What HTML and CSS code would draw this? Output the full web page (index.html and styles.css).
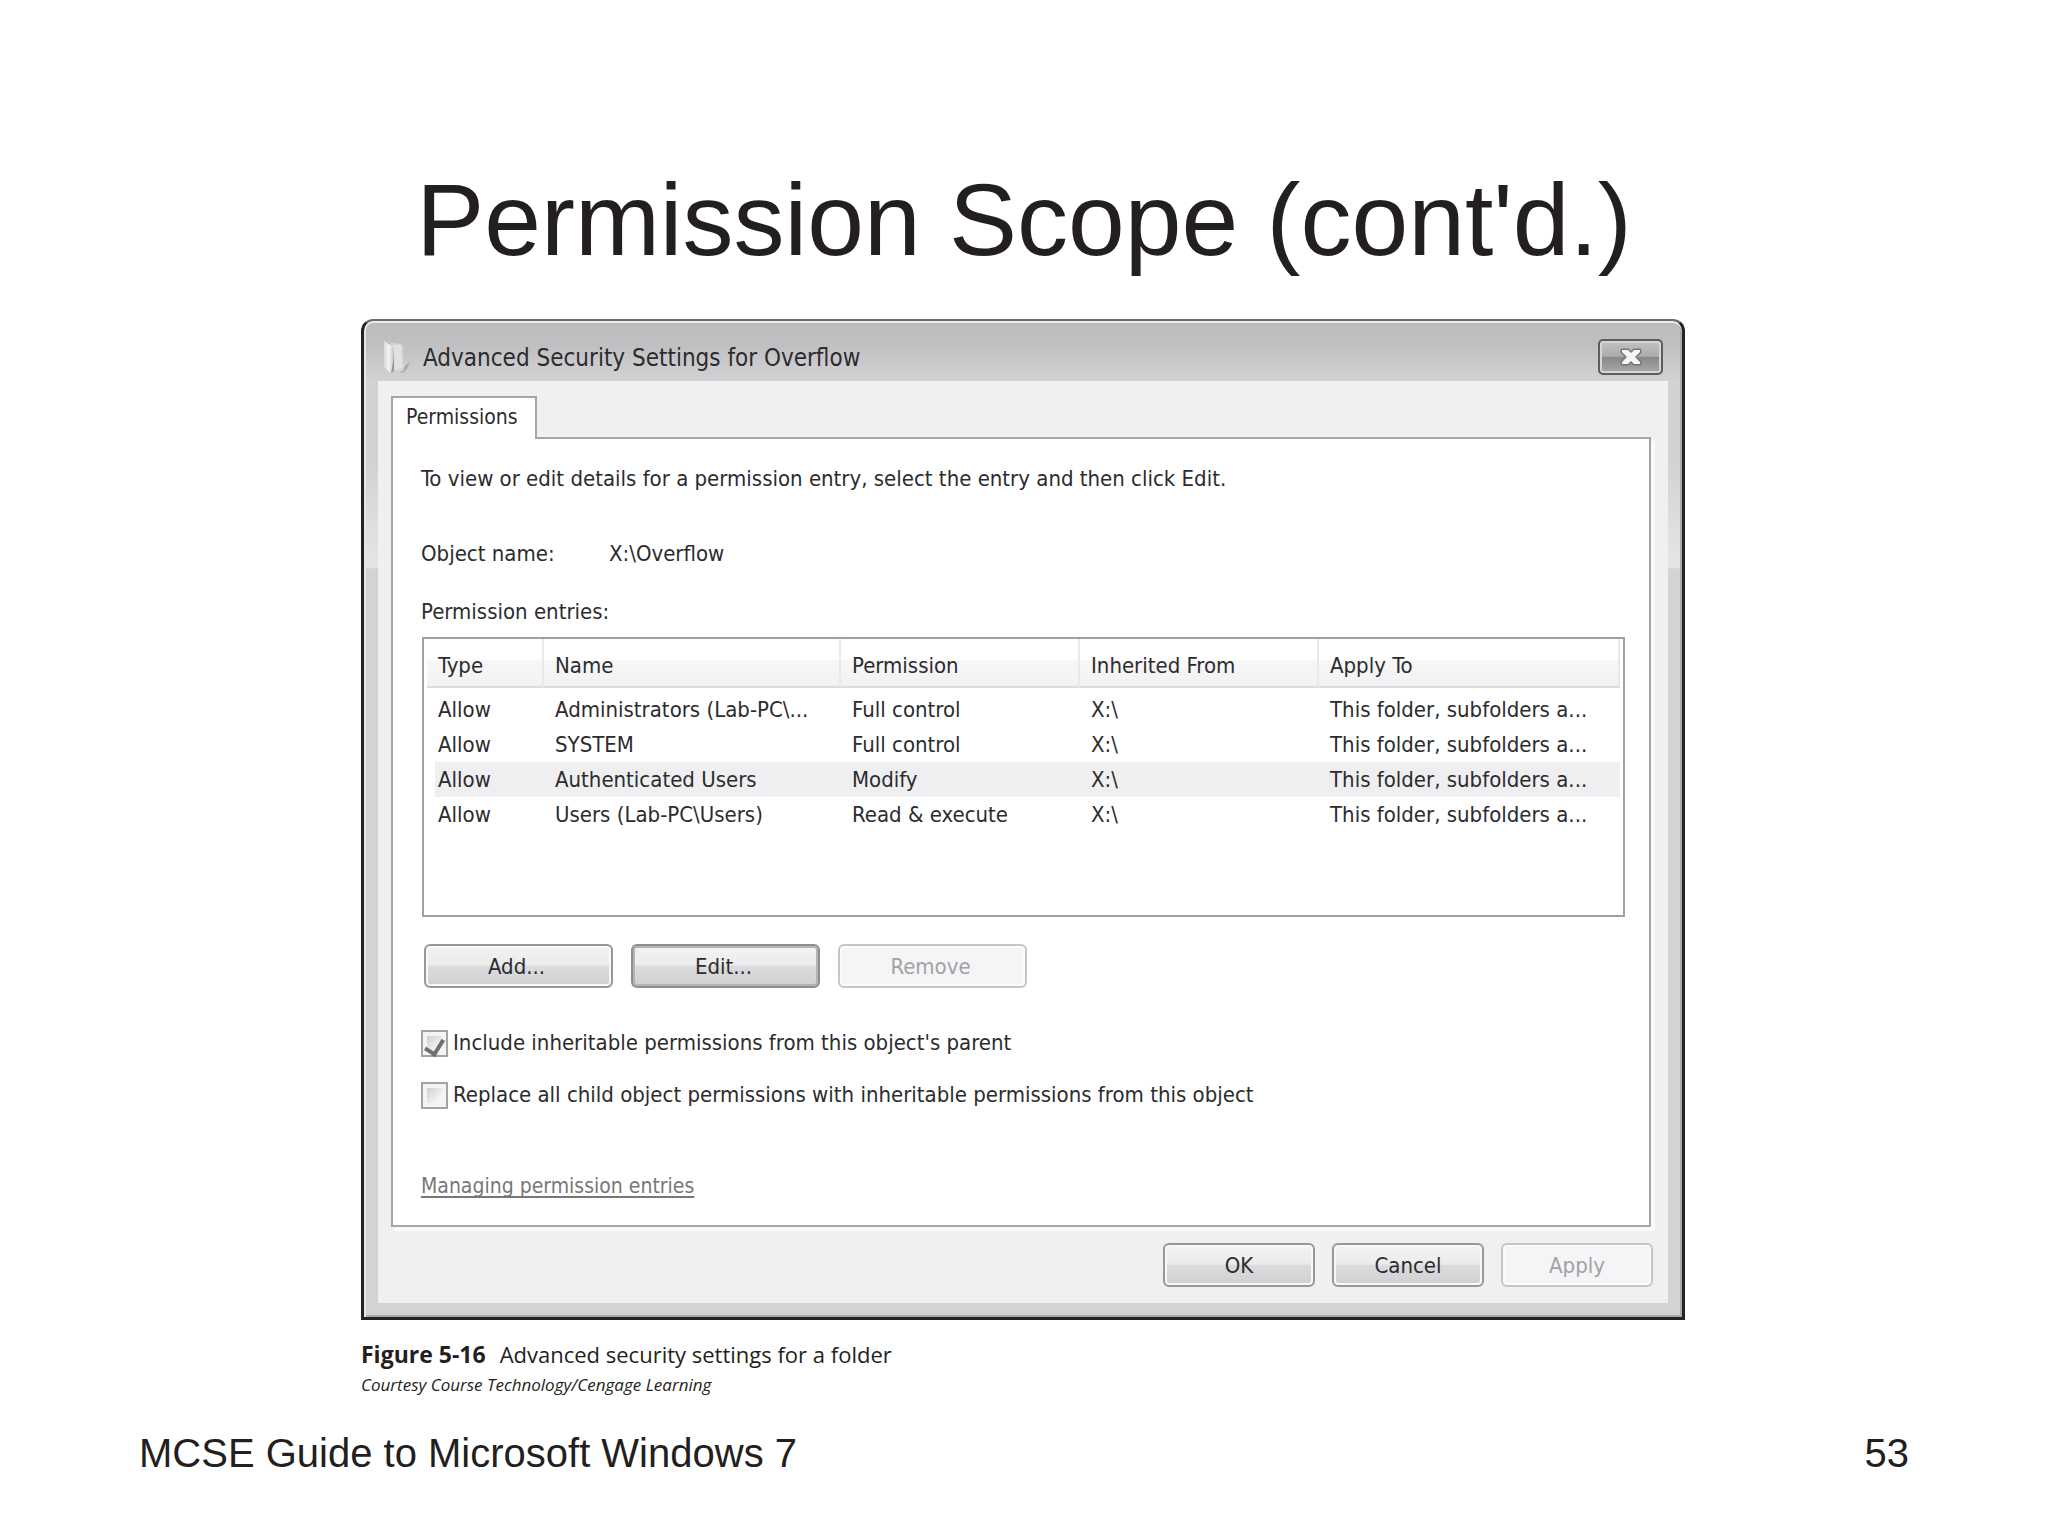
FILE: index.html
```
<!DOCTYPE html>
<html lang="en">
<head>
  <meta charset="UTF-8" />
  <meta name="viewport" content="width=device-width, initial-scale=1.0"/>
  <title>Permission Scope (cont'd.)</title>
  <link rel="stylesheet" href="styles.css">
</head>
<body>

  <main class="slide">
    <h1>Permission Scope (cont'd.)</h1>

    <figure class="figure">
      <div class="window">
        <div class="title-bar">
          <svg class="folder-icon" viewBox="0 0 28 34" aria-hidden="true">
            <defs>
              <linearGradient id="flap" x1="0" x2="1" y1="0" y2="0">
                <stop offset="0" stop-color="#d9d9db"/>
                <stop offset=".5" stop-color="#f4f4f5"/>
                <stop offset="1" stop-color="#c4c4c6"/>
              </linearGradient>
            </defs>
            <path d="M17 30 L27 22 L24 29 L19 33 Z" fill="#a9a9ac"/>
            <path d="M8 3 L18 4 Q20 5 20 7 L20 22 L22 25 L20 31 L9 31 Z" fill="#d6d6d8"/>
            <path d="M11 5 L18 5 L19 28 L12 29 Z" fill="#e2e2e4"/>
            <path d="M1 1 L9 6 Q11 8 11 11 L10 27 L8 33 L1 27 Z" fill="url(#flap)"/>
            <path d="M10 22 L11 12 L11 31 L8 33 Z" fill="#98989b"/>
          </svg>
          <h2>Advanced Security Settings for Overflow</h2>
          <button type="button" class="close-btn" aria-label="Close">
            <svg viewBox="0 0 24 18" aria-hidden="true">
              <path d="M3 2 H9 L12 5 L15 2 H21 V4 L16 9 L21 14 V16 H15 L12 13 L9 16 H3 V14 L8 9 L3 4 Z" fill="#f6f6f7" stroke="#77777a" stroke-width="3" stroke-linejoin="round" paint-order="stroke"/>
            </svg>
          </button>
        </div>

        <div class="window-body">
          <div class="tabs">
            <button type="button" class="tab">Permissions</button>
          </div>

          <section class="panel">
            <p>To view or edit details for a permission entry, select the entry and then click Edit.</p>
            <dl class="object">
              <dt>Object name:</dt>
              <dd>X:\Overflow</dd>
            </dl>
            <p id="entriesLabel" class="entries-label">Permission entries:</p>

            <div class="list">
              <table aria-labelledby="entriesLabel">
                <thead>
                  <tr>
                    <th class="col-type">Type</th>
                    <th class="col-name">Name</th>
                    <th class="col-perm">Permission</th>
                    <th class="col-from">Inherited From</th>
                    <th>Apply To</th>
                  </tr>
                </thead>
                <tbody>
                  <tr><td>Allow</td><td>Administrators (Lab-PC\...</td><td>Full control</td><td>X:\</td><td>This folder, subfolders a...</td></tr>
                  <tr><td>Allow</td><td>SYSTEM</td><td>Full control</td><td>X:\</td><td>This folder, subfolders a...</td></tr>
                  <tr class="selected"><td>Allow</td><td>Authenticated Users</td><td>Modify</td><td>X:\</td><td>This folder, subfolders a...</td></tr>
                  <tr><td>Allow</td><td>Users (Lab-PC\Users)</td><td>Read &amp; execute</td><td>X:\</td><td>This folder, subfolders a...</td></tr>
                </tbody>
              </table>
            </div>

            <div class="entry-buttons">
              <button type="button" class="btn">Add...</button>
              <button type="button" class="btn default">Edit...</button>
              <button type="button" class="btn" disabled>Remove</button>
            </div>

            <div class="checks">
              <div class="check">
                <input type="checkbox" id="inherit" checked/>
                <label for="inherit">Include inheritable permissions from this object's parent</label>
              </div>
              <div class="check">
                <input type="checkbox" id="replace"/>
                <label for="replace">Replace all child object permissions with inheritable permissions from this object</label>
              </div>
            </div>

            <a class="help-link" href="#">Managing permission entries</a>
          </section>

          <div class="dialog-buttons">
            <button type="button" class="btn">OK</button>
            <button type="button" class="btn">Cancel</button>
            <button type="button" class="btn" disabled>Apply</button>
          </div>
        </div>
      </div>

      <figcaption>
        <p class="caption"><b>Figure 5-16</b><span>Advanced security settings for a folder</span></p>
        <p class="credit">Courtesy Course Technology/Cengage Learning</p>
      </figcaption>
    </figure>

    <footer class="slide-footer">
      <span>MCSE Guide to Microsoft Windows 7</span>
      <span>53</span>
    </footer>
  </main>

</body>
</html>
```
FILE: styles.css
```
* { box-sizing:border-box; margin:0; padding:0; }
body { background:#fff; color:#231f20; font-family:"Liberation Sans",Arial,sans-serif; }

/* slide */
.slide { padding-top:160px; }
h1 { font-size:102px; font-weight:400; line-height:120px; text-align:center; }
.figure { margin:39px 363px 0 361px; }
.slide-footer { display:flex; justify-content:space-between; margin-top:33px; padding:0 139px; font-size:40px; line-height:46px; }

/* window frame */
.window {
  border:3px solid #232325;
  border-top:2px solid #6c6c6e;
  border-radius:12px 12px 0 0;
  padding:0 14px 14px;
  background:linear-gradient(to bottom, #bcbcbd 0, #c0c0c2 24px, #d3d3d6 60px, #d2d2d4 140px, #e6e6e7 246px, #d3d3d5 248px);
  box-shadow:inset 0 2px 0 #ededee, inset 2px 0 0 #e6e6e7, inset -2px 0 0 #a9a9ab, inset 0 -2px 0 #a9a9ab;
  font-family:"DejaVu Sans Condensed","DejaVu Sans",Tahoma,sans-serif;
  font-size:22px;
  line-height:28px;
  color:#2c2c2e;
}
.title-bar { display:flex; align-items:center; height:60px; padding:12px 5px 0 5px; }
.title-bar h2 { flex:1; font-size:24px; font-weight:400; margin-left:12px; padding-top:2px; }
.folder-icon { width:28px; height:34px; }
.close-btn {
  display:flex;
  align-items:center;
  justify-content:center;
  width:65px;
  height:36px;
  border:2px solid #5d5d60;
  border-radius:5px;
  background:linear-gradient(to bottom, #c3c3c5 0, #acacae 48%, #88888b 50%, #a9a9ac 100%);
  box-shadow:inset 0 0 0 2px #d5d5d7;
}
.close-btn svg { width:24px; height:18px; }

.window-body { padding:15px 17px 16px 13px; background:#f0f0f2; }

/* tab + panel */
.tabs { display:flex; }
.tab {
  position:relative;
  z-index:1;
  height:43px;
  margin-bottom:-2px;
  padding:0 17px 4px 13px;
  border:2px solid #a6a6a9;
  border-bottom:none;
  background:#fff;
  color:inherit;
  font:inherit;
  font-size:21px;
}
.panel {
  padding:26px 24px 25px 28px;
  border:2px solid #a6a6a9;
  background:#fff;
  box-shadow:4px 4px 0 #fafafb;
}
.object { display:flex; margin-top:47px; }
.object dt { width:188px; }
.entries-label { margin-top:30px; }

/* list */
.list { min-height:280px; margin:11px 0 0 1px; padding:0 3px; border:2px solid #a0a0a3; }
table { width:100%; border-collapse:separate; border-spacing:0; table-layout:fixed; }
th, td { padding-left:11px; text-align:left; font-weight:400; white-space:nowrap; }
th {
  height:49px;
  padding-top:7px;
  border-right:2px solid #e9e9eb;
  border-bottom:2px solid #dcdcde;
  background:linear-gradient(to bottom, #fff 45%, #f7f7f8 46%, #f2f2f4 100%);
}
.col-type { width:117px; }
.col-name { width:297px; }
.col-perm, .col-from { width:239px; }
tbody::before { content:""; display:block; height:4px; }
td { height:35px; }
.selected td { background:#efeff1; }
.selected td:first-child { background:linear-gradient(to right, #fff 8px, #efeff1 8px); }

/* buttons */
.btn {
  height:44px;
  padding-top:2px;
  border:2px solid #98989b;
  border-radius:6px;
  background:linear-gradient(to bottom, #f3f3f4 0, #ebebec 48%, #dcdcde 50%, #d0d0d2 100%);
  box-shadow:inset 0 0 0 2px #f8f8f9;
  color:inherit;
  font:inherit;
}
.btn.default { border-color:#8e8e91; box-shadow:inset 0 0 0 2px #b4b4b7; }
.btn:disabled { border-color:#c6c6c9; background:#f5f5f7; box-shadow:inset 0 0 0 2px #fbfbfc; color:#a2a2a5; }
.entry-buttons { display:flex; gap:18px; margin-top:27px; padding-left:3px; }
.entry-buttons .btn { width:189px; padding-right:4px; }
.dialog-buttons { display:flex; justify-content:flex-end; gap:17px; margin:16px -2px 0 0; }
.dialog-buttons .btn { width:152px; }

/* checkboxes */
.checks { display:flex; flex-direction:column; gap:24px; margin-top:41px; }
.check { display:flex; align-items:center; gap:5px; }
.check input {
  appearance:none;
  display:grid;
  justify-items:center;
  width:27px;
  height:27px;
  border:2px solid #a3a3a6;
  background:linear-gradient(135deg, #cfcfd1, #f6f6f7 80%) content-box, #f4f4f5;
  padding:4px;
}
.check input:checked::before {
  content:"";
  width:9px;
  height:15px;
  border:solid #6f6f72;
  border-width:0 4px 4px 0;
  transform:rotate(32deg);
}

.help-link {
  display:inline-block;
  margin-top:63px;
  color:#77777a;
  font-size:21px;
  text-decoration-thickness:2px;
  text-underline-offset:3px;
  text-decoration-skip-ink:none;
}

/* caption */
figcaption { margin-top:19px; font-family:"Open Sans","Noto Sans",sans-serif; }
.caption { display:flex; align-items:baseline; gap:14px; font-size:22px; line-height:30px; }
.caption b { font-size:23px; font-weight:700; }
.credit { margin-top:4px; font-size:17px; font-style:italic; line-height:24px; }

@media(max-width:1500px){ .figure{margin-left:40px; margin-right:40px;} h1{font-size:64px;} }
```
